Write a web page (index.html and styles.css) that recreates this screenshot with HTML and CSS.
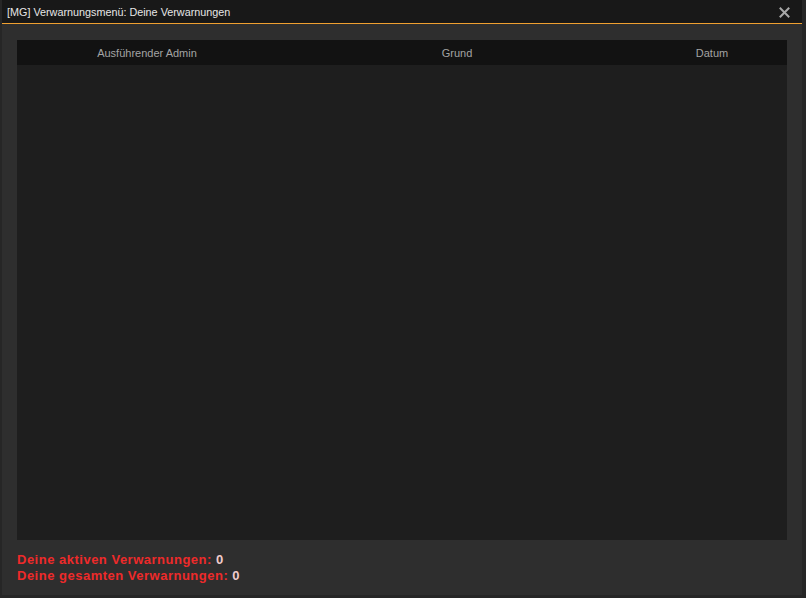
FILE: index.html
```html
<!DOCTYPE html>
<html lang="de">
<head>
    <meta charset="UTF-8">
    <meta name="viewport" content="width=device-width, initial-scale=1.0">
    <title>Verwarnungsmenü</title>
    <link rel="stylesheet" href="styles.css">
</head>
<body>

<div id="window">
    <div class="titlebar">
        <span class="title">[MG] Verwarnungsmenü: Deine Verwarnungen</span>
        <span class="close">
            <svg width="11" height="11" viewBox="0 0 11 11">
                <path d="M1.5 1.5 L9.5 9.5 M9.5 1.5 L1.5 9.5" stroke="#a8a8a8" stroke-width="2" stroke-linecap="square"/>
            </svg>
        </span>
    </div>

    <div class="content">
        <div class="list">
            <div class="list-header">
                <div class="col col-admin">Ausführender Admin</div>
                <div class="col col-reason">Grund</div>
                <div class="col col-date">Datum</div>
            </div>
            <div class="list-body"></div>
        </div>

        <div class="summary">
            <div>Deine aktiven Verwarnungen: <span class="count">0</span></div>
            <div>Deine gesamten Verwarnungen: <span class="count">0</span></div>
        </div>
    </div>
</div>

</body>
</html>
```

FILE: styles.css
```css
body {
    margin: 0;
    padding: 0;
    background-color: #262626;
    font-family: 'Liberation Sans', Arial, sans-serif;
    height: 598px;
    overflow: hidden;
}

#window {
    margin: 0 4px 0 2px;
    height: 595px;
    background-color: #2e2e2e;
    display: flex;
    flex-direction: column;
}

.titlebar {
    height: 23px;
    background-color: #181818;
    border-bottom: 1px solid #f0a030;
    display: flex;
    align-items: center;
    justify-content: space-between;
    padding: 0 12px 0 5px;
}

.title {
    color: #e6e6e6;
    font-size: 10.8px;
}

.close {
    display: flex;
    padding-top: 2px;
}

.content {
    flex: 1;
    display: flex;
    flex-direction: column;
    padding: 16px 15px 0 15px;
}

.list {
    height: 500px;
    display: flex;
    flex-direction: column;
}

.list-header {
    height: 25px;
    background-color: #121212;
    display: flex;
    align-items: center;
    color: #a4a4a4;
    font-size: 11px;
}

.col {
    text-align: center;
}

.col-admin {
    width: 260px;
}

.col-reason {
    width: 360px;
}

.col-date {
    width: 150px;
}

.list-body {
    flex: 1;
    background-color: #1e1e1e;
}

.summary {
    margin-top: 12px;
    color: #ee2a2a;
    font-size: 13px;
    font-weight: bold;
    letter-spacing: 0.5px;
    line-height: 16px;
}

.count {
    color: #f2cccc;
}
```
